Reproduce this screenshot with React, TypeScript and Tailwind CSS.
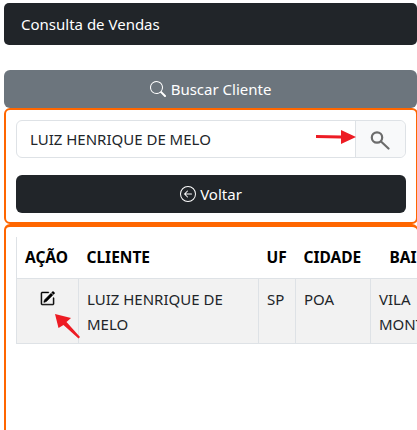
import { BsArrowLeftCircle, BsPencilSquare, BsSearch } from "react-icons/bs";

const RedArrow = ({ className }: { className: string }) => (
  <svg className={className} viewBox="0 0 40 14" fill="#ed1c24">
    <path d="M0 5 L25 5.5 L25 0 L40 7 L25 14 L25 8.5 L0 8 Z" />
  </svg>
);

const App = () => {
  return (
    <div className="h-screen overflow-hidden bg-white pl-1 pt-[3px] text-[#212529] font-['Noto_Sans','Open_Sans',sans-serif] text-[15px]">
      <div className="h-[42px] flex items-center rounded-[5px] bg-[#212529] pl-[17px] text-white">
        Consulta de Vendas
      </div>

      <button className="mt-[25px] h-[38px] w-full flex items-center justify-center gap-[5px] rounded-[6px] bg-[#6c757d] text-white">
        <BsSearch className="w-4 h-4" />
        Buscar Cliente
      </button>

      <div className="h-[116px] -mr-px rounded-[6px] border-2 border-[#ff6600] px-[10px] pt-[10px]">
        <div className="relative flex h-[38px] rounded-[6px] border border-[#dee2e6]">
          <div className="flex-1 flex items-center pl-[13px]">LUIZ HENRIQUE DE MELO</div>
          <div className="w-[50px] flex items-center justify-center rounded-r-[6px] border-l border-[#dee2e6] bg-[#f8f9fa]">
            <svg className="w-[21px] h-[21px] text-[#6c6c6c]" viewBox="0 0 21 21" fill="none" stroke="currentColor" strokeWidth="2.2">
              <circle cx="7" cy="8.5" r="5.2" />
              <path d="M11 12.5 L18.5 19.5" strokeLinecap="round" />
            </svg>
          </div>
          <RedArrow className="absolute left-[299px] top-[9px] w-[40px] h-[14px]" />
        </div>
        <button className="mt-[17px] h-[38px] w-full flex items-center justify-center gap-1 rounded-[6px] bg-[#212529] text-white">
          <BsArrowLeftCircle className="w-4 h-4" />
          Voltar
        </button>
      </div>

      <div className="h-[300px] -mr-px overflow-hidden rounded-[6px] border-l-2 border-t-[3px] border-r border-[#ff6600] pl-[10px] pt-[10px]">
        <div className="relative">
          <table className="table-fixed border-collapse w-[444px]">
            <colgroup>
              <col className="w-[62px]" />
              <col className="w-[180px]" />
              <col className="w-[37px]" />
              <col className="w-[75px]" />
              <col className="w-[90px]" />
            </colgroup>
            <thead>
              <tr className="h-[41px] text-left text-black text-[15.5px]">
                <th className="border-l border-[#dee2e6] pl-[8px] font-bold">AÇÃO</th>
                <th className="pl-2 font-bold">CLIENTE</th>
                <th className="pl-2 font-bold">UF</th>
                <th className="pl-2 font-bold">CIDADE</th>
                <th className="pl-[19px] font-bold">BAIRRO</th>
              </tr>
            </thead>
            <tbody>
              <tr className="h-[65px] bg-[#f2f2f2] align-top leading-[25px] border-y border-[#dee2e6]">
                <td className="border-x border-[#dee2e6] pt-[8px]">
                  <div className="flex justify-center pt-[4px] pr-[1px]">
                    <BsPencilSquare className="w-[15px] h-[15px] text-black stroke-[0.5px]" />
                  </div>
                </td>
                <td className="border-r border-[#dee2e6] pl-2 pt-[8px]">LUIZ HENRIQUE DE MELO</td>
                <td className="border-r border-[#dee2e6] pl-2 pt-[8px]">SP</td>
                <td className="border-r border-[#dee2e6] pl-2 pt-[8px]">POA</td>
                <td className="pl-2 pt-[8px]">VILA MONTEIRO</td>
              </tr>
            </tbody>
          </table>
          <svg className="absolute left-[38px] top-[76px] w-[28px] h-[28px]" viewBox="0 0 28 28" fill="#ed1c24">
            <path d="M1 1 L17 5 L12.5 9 L26 24 L24.5 25.5 L9.5 12 L4.5 15 Z" />
          </svg>
        </div>
      </div>
    </div>
  );
};

export default App;
